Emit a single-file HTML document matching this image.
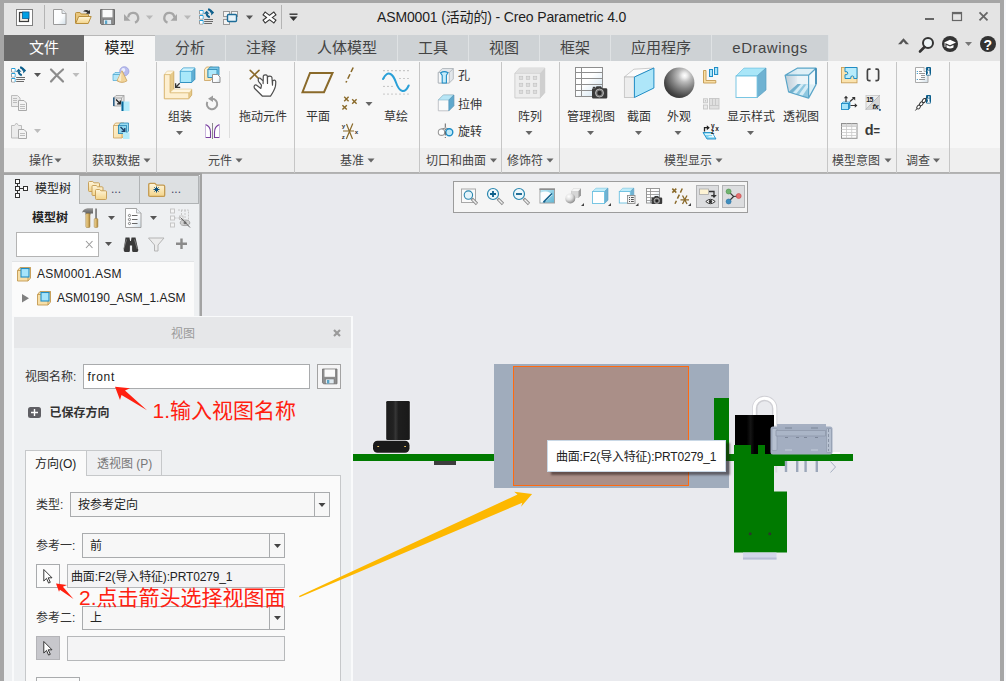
<!DOCTYPE html>
<html lang="zh-CN">
<head>
<meta charset="utf-8">
<title>ASM0001 (活动的) - Creo Parametric 4.0</title>
<style>
*{box-sizing:border-box;margin:0;padding:0}
html,body{width:1006px;height:681px;overflow:hidden;background:#a6a6a6}
body{font-family:"Liberation Sans","Noto Sans CJK SC",sans-serif;font-size:12px;color:#333;position:relative}
#win{position:absolute;left:4px;top:3px;width:996px;height:678px;background:#e9eaee;overflow:hidden}
#rightwhite{position:absolute;left:1004px;top:0;width:2px;height:681px;background:#f8f9fc}
#title{position:absolute;left:0;top:0;width:996px;height:32px;background:#e4e4e4}
#tabs{position:absolute;left:0;top:32px;width:996px;height:26px;background:#e4e4e4}
.tab{position:absolute;top:0;height:26px;line-height:25px;text-align:center;font-size:15px;color:#444;background:#ced2d5;border-right:1px solid #dfe2e4;white-space:nowrap}
.tab.file{background:#6a6a6a;color:#fff;border-right:none}
.tab.act{background:#f7f7f7;color:#222;border-right:none;border-top:1px solid #b8b8b8;line-height:24px}
#ribbon{position:absolute;left:0;top:58px;width:996px;height:112px;background:#f7f7f7;border-bottom:1px solid #b0b0b0}
#rlabels{position:absolute;left:0;top:87px;width:996px;height:24px;background:#efefef}
/* page-coordinate layer */
#pg{position:absolute;left:-4px;top:-3px;width:1006px;height:681px}
#pg>svg{position:absolute;left:0;top:0;width:1006px;height:681px;overflow:visible}
.t{position:absolute;white-space:nowrap;font-size:12px;line-height:16px;color:#333}
.gl{color:#444}
.gs{position:absolute;top:62px;width:1px;height:111px;background:#c6c6c6}
.b{font-weight:bold}
</style>
</head>
<body>
<div id="win">
  <div id="title"></div>
  <div id="tabs">
    <div class="tab file" style="left:0;width:80px">文件</div>
    <div class="tab act" style="left:80px;width:71px">模型</div>
    <div class="tab" style="left:151px;width:71px">分析</div>
    <div class="tab" style="left:222px;width:71px">注释</div>
    <div class="tab" style="left:293px;width:101px">人体模型</div>
    <div class="tab" style="left:394px;width:71px">工具</div>
    <div class="tab" style="left:465px;width:71px">视图</div>
    <div class="tab" style="left:536px;width:71px">框架</div>
    <div class="tab" style="left:607px;width:101px">应用程序</div>
    <div class="tab" style="left:708px;width:117px;letter-spacing:0.5px">eDrawings</div>
  </div>
  <div id="ribbon"><div id="rlabels"></div></div>
  <div id="pg">
<!-- ===== title bar ===== -->
<div class="t" style="left:377px;top:8px;font-size:14px;line-height:18px;color:#1e1e1e;letter-spacing:-0.15px">ASM0001 (活动的) - Creo Parametric 4.0</div>
<svg viewBox="0 0 1006 681">
<defs>
<linearGradient id="gDoc" x1="0" y1="0" x2="1" y2="1"><stop offset="0" stop-color="#ffffff"/><stop offset="0.6" stop-color="#fbfcfd"/><stop offset="1" stop-color="#cfdde6"/></linearGradient>
<linearGradient id="gFold" x1="0" y1="0" x2="0" y2="1"><stop offset="0" stop-color="#fff6dc"/><stop offset="1" stop-color="#f3d48a"/></linearGradient>
<linearGradient id="gCyan" x1="0" y1="0" x2="1" y2="1"><stop offset="0" stop-color="#c8f0fb"/><stop offset="1" stop-color="#9ee0f5"/></linearGradient>
<linearGradient id="gSide" x1="0" y1="0" x2="1" y2="1"><stop offset="0" stop-color="#7fc4e0"/><stop offset="1" stop-color="#4e9fc4"/></linearGradient>
<linearGradient id="gTan" x1="0" y1="0" x2="1" y2="1"><stop offset="0" stop-color="#fff2d2"/><stop offset="1" stop-color="#f6dca0"/></linearGradient>
<radialGradient id="gSph" cx="0.35" cy="0.3" r="0.8"><stop offset="0" stop-color="#f2f2f2"/><stop offset="0.35" stop-color="#8d8d8d"/><stop offset="0.8" stop-color="#3a3a3a"/><stop offset="1" stop-color="#222"/></radialGradient>
<radialGradient id="gSphL" cx="0.35" cy="0.3" r="0.8"><stop offset="0" stop-color="#ffffff"/><stop offset="0.45" stop-color="#dedede"/><stop offset="1" stop-color="#7c7c7c"/></radialGradient>
<g id="regen">
  <g fill="#fff" stroke-width="1"><path d="M0.500 1.500v3.500h3.500M0.500 6.500v3.500h3.500M0.500 11.500v3.500h3.500" stroke="#9a9a9a"/>
  <path d="M0.500 1.500h3.500v3.500M0.500 6.500h3.500v3.500M0.500 11.500h3.500v3.500" stroke="#21a0dc"/></g>
  <rect x="1" y="2" width="2.500" height="2.500" fill="#fff"/><rect x="1" y="7" width="2.500" height="2.500" fill="#fff"/><rect x="1" y="12" width="2.500" height="2.500" fill="#fff"/>
  <path d="M5.200 10.500h8.800M5.200 12.500h8.800M5.200 14.500h7.800" stroke="#6a6a6a" stroke-width="1"/>
  <path d="M4.800 4.800l2.900-3.100 2.700 3.100z" fill="#0d5f8c"/><path d="M7.600 4.500q0.300 3 3.200 3.700" fill="none" stroke="#0d5f8c" stroke-width="2"/>
  <path d="M12.200 0.800l2.900 2.800-2.900 2.800z" fill="#0d5f8c"/><path d="M12.500 3.600q-0.500-2.600-3.400-3.300" fill="none" stroke="#0d5f8c" stroke-width="2"/>
</g>
<path id="dda" d="M0 0h7l-3.5 4z"/>
</defs>
<!-- app icon -->
<rect x="16.5" y="9.5" width="16" height="16" fill="#fff" stroke="#808080"/>
<rect x="19.5" y="12.5" width="9" height="9" fill="#f1eee6" stroke="#3c3c3c" stroke-width="1.2"/>
<rect x="22.5" y="12" width="6.5" height="6.5" fill="#00a0e4" stroke="#0a5c96" stroke-width="0.8"/>
<rect x="44" y="5" width="1" height="24" fill="#b4b4b4"/>
<!-- new -->
<path d="M53.5 9.5h8.5l4 4v11h-12.500z" fill="url(#gDoc)" stroke="#9a9a9a"/>
<path d="M62 9.500v4h4" fill="#e9eef2" stroke="#9a9a9a" stroke-width="0.8"/>
<!-- open -->
<path d="M75.500 23v-9.500q0-1 1-1h3.500l1.200 1.500h6.300q1 0 1 1v2" fill="#e9c67c" stroke="#b98f3c" stroke-width="1"/>
<path d="M75.700 23.500l3-7h12.500l-3 7z" fill="url(#gFold)" stroke="#b98f3c" stroke-width="1"/>
<path d="M83 11.500q3-2.500 6-0.500l1-1.200v4h-4l1.300-1.300q-2-1.200-4.300-1z" fill="#333"/>
<!-- save -->
<path d="M100.500 9.500h14v15h-13l-1-1z" fill="#8b8b8b" stroke="#6e6e6e"/>
<rect x="102.500" y="9.800" width="10" height="7.500" fill="#fafafa"/>
<rect x="103.500" y="19.500" width="8" height="5" fill="#dfe9ef" stroke="#6e6e6e" stroke-width="0.6"/>
<rect x="105" y="20.500" width="2.200" height="3.500" fill="#5aa5c8"/>
<!-- undo / redo -->
<path d="M128.200 17.500A5 5 0 1 1 135 22.600" fill="none" stroke="#a6a6a6" stroke-width="2.300"/>
<path d="M124 14v6.800h6.500z" fill="#a6a6a6"/>
<use href="#dda" x="146" y="15.500" fill="#b9b9b9"/>
<path d="M174.300 17.500A5 5 0 1 0 167.500 22.600" fill="none" stroke="#a6a6a6" stroke-width="2.300"/>
<path d="M177 14v6.800h-6.500z" fill="#a6a6a6"/>
<use href="#dda" x="184" y="15.500" fill="#b9b9b9"/>
<!-- regen -->
<use href="#regen" x="199" y="9"/>
<!-- windows -->
<rect x="223.500" y="11.500" width="6" height="5" fill="#f4f4f4" stroke="#9a9a9a"/>
<rect x="231.500" y="11.500" width="6" height="5" fill="#f4f4f4" stroke="#9a9a9a"/>
<rect x="223.500" y="19.500" width="6" height="5" fill="#f4f4f4" stroke="#9a9a9a"/>
<rect x="227.500" y="14.500" width="9" height="7" rx="1" fill="#e8f4fa" stroke="#1d6c98" stroke-width="1.400"/>
<use href="#dda" x="246" y="15.500" fill="#555"/>
<!-- close x -->
<path d="M265.500 14.500l8 6M273.500 14.500l-8 6" stroke="#333" stroke-width="4.600" stroke-linecap="square"/>
<path d="M265.500 14.500l8 6M273.500 14.500l-8 6" stroke="#fff" stroke-width="2.400" stroke-linecap="square"/>
<path d="M265.500 14.500l8 6M273.500 14.500l-8 6" stroke="#333" stroke-width="1" stroke-linecap="square" opacity="0"/>
<rect x="281" y="5" width="1" height="24" fill="#b4b4b4"/>
<rect x="289.500" y="13.500" width="8" height="1.400" fill="#333"/>
<path d="M289.500 16.500h8l-4 4.500z" fill="#333"/>
<!-- window controls -->
<rect x="925" y="18" width="9" height="2" fill="#666"/>
<rect x="952.500" y="12.500" width="9" height="8" fill="none" stroke="#666" stroke-width="1.200"/>
<rect x="952" y="12" width="10" height="2.200" fill="#666"/>
<path d="M979.500 12.300l8 8M987.500 12.300l-8 8" stroke="#666" stroke-width="1.800"/>
<!-- ribbon right controls -->
<path d="M898 44.200l5.500-6 5.500 6h-3.200l-2.300-2.600-2.300 2.600z" fill="#555"/>
<circle cx="928" cy="43" r="5" fill="#eef4f6" stroke="#333" stroke-width="2"/>
<path d="M924.500 47l-4.500 4.500" stroke="#333" stroke-width="2.600" stroke-linecap="round"/>
<circle cx="950" cy="44" r="8" fill="#333"/>
<path d="M944 42.500l6-2.800 6 2.800-6 2.800z" fill="#fff"/>
<path d="M946.500 45v2.500q3.500 2 7 0v-2.500l-3.500 1.600z" fill="#fff"/>
<path d="M945 43v4" stroke="#fff" stroke-width="0.800"/>
<use href="#dda" x="965" y="42" fill="#777"/>
<circle cx="988" cy="44" r="8" fill="#333"/>
</svg>
<div class="t b" style="left:983.500px;top:35.500px;font-size:14px;line-height:18px;color:#fff">?</div>
<!-- ===== ribbon ===== -->
<div class="gs" style="left:86px"></div><div class="gs" style="left:156px"></div><div class="gs" style="left:294px"></div>
<div class="gs" style="left:419px"></div><div class="gs" style="left:501px"></div><div class="gs" style="left:559px"></div>
<div class="gs" style="left:827px"></div><div class="gs" style="left:896px"></div><div class="gs" style="left:949px"></div>
<div class="gs" style="left:229px;top:71px;height:67px;background:#dedede"></div>
<div class="t gl" style="left:29px;top:153px">操作</div>
<div class="t gl" style="left:92px;top:153px">获取数据</div>
<div class="t gl" style="left:208px;top:153px">元件</div>
<div class="t gl" style="left:340px;top:153px">基准</div>
<div class="t gl" style="left:426px;top:153px">切口和曲面</div>
<div class="t gl" style="left:507px;top:153px">修饰符</div>
<div class="t gl" style="left:664px;top:153px">模型显示</div>
<div class="t gl" style="left:832px;top:153px">模型意图</div>
<div class="t gl" style="left:906px;top:153px">调查</div>
<div class="t" style="left:168px;top:109px">组装</div>
<div class="t" style="left:239px;top:109px">拖动元件</div>
<div class="t" style="left:306px;top:109px">平面</div>
<div class="t" style="left:384px;top:109px">草绘</div>
<div class="t" style="left:458px;top:68px">孔</div>
<div class="t" style="left:458px;top:97px">拉伸</div>
<div class="t" style="left:458px;top:124px">旋转</div>
<div class="t" style="left:518px;top:109px">阵列</div>
<div class="t" style="left:567px;top:109px">管理视图</div>
<div class="t" style="left:627px;top:109px">截面</div>
<div class="t" style="left:667px;top:109px">外观</div>
<div class="t" style="left:727px;top:109px">显示样式</div>
<div class="t" style="left:783px;top:109px">透视图</div>
<svg viewBox="0 0 1006 681">
<g fill="#666">
<use href="#dda" x="54.500" y="158.500"/><use href="#dda" x="143.500" y="158.500"/><use href="#dda" x="235.500" y="158.500"/>
<use href="#dda" x="367.500" y="158.500"/><use href="#dda" x="490" y="158.500"/><use href="#dda" x="546.500" y="158.500"/>
<use href="#dda" x="715.500" y="158.500"/><use href="#dda" x="884.500" y="158.500"/><use href="#dda" x="933" y="158.500"/>
<use href="#dda" x="176" y="131"/><use href="#dda" x="525.500" y="131"/><use href="#dda" x="587" y="131"/>
<use href="#dda" x="635" y="131"/><use href="#dda" x="674.500" y="131"/><use href="#dda" x="747" y="131"/>
<use href="#dda" x="365.500" y="102"/>
</g>
<!-- group 1 -->
<use href="#regen" x="11" y="67"/>
<use href="#dda" x="34" y="73" fill="#555"/>
<path d="M51 69.500l12 12M63 69.500q-6 5-12 12" stroke="#8c8c8c" stroke-width="2.200" fill="none" stroke-linecap="round"/>
<use href="#dda" x="72.500" y="73" fill="#bdbdbd"/>
<g stroke="#bcbcbc" fill="#ececec" stroke-width="1">
<path d="M11.500 95.500h6l2.500 2.500v8.500h-8.500z"/><path d="M18.500 100.500h5.500l2.500 2.500v7.500h-8z" fill="#f4f4f4" stroke="#a9a9a9"/>
<path d="M20 104.500h5M20 106.500h5M20 108.500h5M13 98.500h4M13 100.500h4M13 102.500h4" stroke-width="0.800" stroke="#b0b0b0"/>
<path d="M11.500 125.500h3l2-2.500 2 2.500h3v12.500h-10z"/><path d="M18.500 129.500h5.500l2.500 2.500v6.500h-8z" fill="#f4f4f4" stroke="#a9a9a9"/>
<path d="M20 133.500h5M20 135.500h5" stroke-width="0.800" stroke="#b0b0b0"/>
</g>
<use href="#dda" x="34" y="129" fill="#bdbdbd"/>
<!-- group 2 -->
<path d="M113 74.500l2-2h7.500v6l-2 2h-7.500z" fill="#b5e6f7" stroke="#5ab0d8" stroke-width="0.800"/>
<path d="M113 74.500h7.500v6M120.500 74.500l2-2" fill="none" stroke="#4aa6cf" stroke-width="0.800"/>
<circle cx="124.300" cy="71.300" r="4.600" fill="#b9bdee" stroke="#9aa0dc" stroke-width="0.800"/>
<circle cx="123.300" cy="70" r="2" fill="#eceeff"/>
<path d="M122 70.800l5 10q-5 3.200-10 0z" fill="#f2d49a" stroke="#c9a05a" stroke-width="0.800"/>
<path d="M121.500 71l-3.500 9q1.500 1 3 1.200z" fill="#fbeccb"/>
<!-- g2 icon 2 -->
<path d="M113.500 98l2.500-2.500h8v8l-2.500 2.500h-8z" fill="#e6e6e6" stroke="#9a9a9a" stroke-width="0.800"/>
<path d="M113.500 98h8v8M121.500 98l2.500-2.500" fill="none" stroke="#9a9a9a" stroke-width="0.800"/>
<rect x="113" y="97.500" width="1.600" height="8.500" fill="#2d5f86"/>
<path d="M116 99.500l4 4M120.300 100.600v3.200h-3.200" stroke="#222" stroke-width="1.300" fill="none"/>
<rect x="121.500" y="101.500" width="8" height="9.500" fill="#b5ecfb"/>
<rect x="121.500" y="101.500" width="2" height="9.500" fill="#0a6a9c"/>
<!-- g2 icon 3 -->
<path d="M113.500 125.500l2-2.500h8.500v12.500l-2 2.500h-8.500z" fill="url(#gTan)" stroke="#c9a05a" stroke-width="0.800"/>
<path d="M113.500 125.500h8.500v12" fill="none" stroke="#c9a05a" stroke-width="0.800"/>
<path d="M118.500 125.500l2-2.500h8v8l-2 2.500h-8z" fill="#9adcf2" stroke="#2a87b4" stroke-width="0.800"/>
<rect x="118.500" y="125.500" width="8" height="8" fill="#8fd6ef" stroke="#2a87b4" stroke-width="0.800"/>
<path d="M120.500 127l4 4M124.800 128v3.300h-3.300" stroke="#1c3f66" stroke-width="1.300" fill="none"/>
<rect x="123" y="132.500" width="6.500" height="6.500" fill="#b5ecfb"/>
<!-- group 3: assemble -->
<path d="M164.400 74.600l2.900-3.300h6.500v18h17.900v5.800l-2.900 3.600h-24.400z" fill="#e6ca8a" stroke="#d0aa62" stroke-width="0.900" stroke-linejoin="round"/>
<path d="M164.400 74.600l2.900-3.300h6.500l-3.800 3.300z" fill="#fff6e0"/>
<path d="M170 92.800l3.800-3.500h17.900l-2.900 3.500z" fill="#fff6e0"/>
<path d="M164.400 74.600h5.600v18.200h18.800v5.900h-24.400z" fill="#fdefd0" stroke="#d9b874" stroke-width="0.800" stroke-linejoin="round"/>
<path d="M180.300 71.300l2.900-3.200h11.700v11.200l-3.200 3.200h-11.400z" fill="#62aed2" stroke="#2e8fc0" stroke-width="0.900" stroke-linejoin="round"/>
<path d="M180.300 71.300l2.900-3.200h11.700l-3.200 3.200z" fill="#d2f4fd" stroke="#58b4dc" stroke-width="0.600" stroke-linejoin="round"/>
<rect x="180.300" y="71.300" width="11.400" height="11.200" fill="#a9e8fa" stroke="#4aa8d4" stroke-width="0.700"/>
<path d="M180.300 82.500h11.400" stroke="#2e8fc0" stroke-width="0.900"/>
<path d="M175.600 83.200v4.200h4.600M175.800 87.200l3.900-3.900" stroke="#333" stroke-width="1.300" fill="none"/>
<!-- g3 small icons -->
<path d="M204.500 69.500l2-2.500h6v11l-2 2.500h-6z" fill="url(#gTan)" stroke="#c9a05a" stroke-width="0.800"/>
<path d="M208 69.500l2-2.500h9v8l-2 2.500h-9z" fill="#7cc8e6" stroke="#2a87b4" stroke-width="0.800"/>
<rect x="208" y="69.500" width="9" height="8" fill="#aee9fb" stroke="#2a87b4" stroke-width="0.800"/>
<path d="M212.500 74.500h5l2.500 2.500v5.500h-7.500z" fill="url(#gDoc)" stroke="#909090" stroke-width="1"/>
<path d="M212 98.800A5.200 5.200 0 1 1 207.300 101.800" fill="none" stroke="#9c9c9c" stroke-width="2"/>
<path d="M208 98.800l5-3.300v6.600z" fill="#9c9c9c"/>
<path d="M205.500 124.500q5 2 5 7.500v5.500h-5" fill="#fff" stroke="#7a3fa0" stroke-width="1.100"/>
<path d="M205.500 124.500v13" stroke="#c9b6dc" stroke-width="1"/>
<path d="M219.500 124.500q-5 2-5 7.500v5.500h5" fill="#fff" stroke="#7a3fa0" stroke-width="1.100"/>
<path d="M219.500 124.500v13" stroke="#c9b6dc" stroke-width="1"/>
<path d="M212.500 123v16" stroke="#8a8a8a" stroke-width="1"/>
<!-- drag -->
<path d="M250.200 70.400l8.800 8.400M259 70.400l-8.800 8.400" stroke="#8a6a2a" stroke-width="1.600" stroke-linecap="round"/>
<path d="M258.500 78.600q-0.600 1.800 0.200 3l2.800 3.600-0.600 3.200-4.600-3.400q-1.800-0.300-2.200 1.400 0 1.500 0.600 2.100l7.800 7.700h8q4-6 4.800-9.500 0.600-3 0.400-5.300-0.400-1.600-1.600-1.300-1.400 0.200-1.500 1l-0.100 4-0.600-7.800q-0.300-1.200-2-1.200-2 0-2.400 0.800l0 6.500 -0.200-7.500q-0.400-1-1.800-1-1.700 0-2.200 1l-0.200 7.700 0-2.700-2.900-2.700q-0.900-0.500-1.700 0.300z" fill="#fff" stroke="#4f4f4f" stroke-width="1.200" stroke-linejoin="round"/>
<!-- plane -->
<path d="M310 73h22.500l-8.500 19.200h-21.500z" fill="none" stroke="#8a6a2a" stroke-width="2"/>
<path d="M353.200 67.500l-7.200 15" stroke="#8a6a2a" stroke-width="1.600" stroke-dasharray="5 2.500"/>
<g stroke="#8a6a2a" stroke-width="1.100">
<path d="M344.200 96.800l4.400 4.400M348.600 96.800l-4.400 4.400M352.200 99.300l4.400 4.400M356.600 99.300l-4.400 4.400M342.400 105.200l4.400 4.400M346.800 105.200l-4.400 4.400" stroke-width="1.400"/>
<path d="M346.500 124l6 15M352.800 123.500l-6.500 15.500M343 131h11" stroke-width="1.200"/>
</g>
<g font-family="Liberation Sans,sans-serif" font-size="6.200" font-weight="bold" fill="#333"><text x="341.800" y="127.500">y</text><text x="341.800" y="139">z</text><text x="354.800" y="133.500">x</text></g>
<!-- sketch -->
<g fill="#909090">
<circle cx="384" cy="70.700" r="0.600"/><circle cx="388" cy="70.700" r="0.600"/><circle cx="392" cy="70.700" r="0.600"/><circle cx="396" cy="70.700" r="0.600"/><circle cx="400" cy="70.700" r="0.600"/><circle cx="404" cy="70.700" r="0.600"/><circle cx="408" cy="70.700" r="0.600"/>
<circle cx="384" cy="78.500" r="0.600"/><circle cx="400" cy="78.500" r="0.600"/><circle cx="404" cy="78.500" r="0.600"/><circle cx="408" cy="78.500" r="0.600"/>
<circle cx="384" cy="86.300" r="0.600"/><circle cx="388" cy="86.300" r="0.600"/><circle cx="392" cy="86.300" r="0.600"/><circle cx="408" cy="86.300" r="0.600"/>
<circle cx="384" cy="94" r="0.600"/><circle cx="388" cy="94" r="0.600"/><circle cx="392" cy="94" r="0.600"/><circle cx="396" cy="94" r="0.600"/><circle cx="400" cy="94" r="0.600"/><circle cx="404" cy="94" r="0.600"/><circle cx="408" cy="94" r="0.600"/>
</g>
<path d="M383 79q3.500-7 7.500-5 3 1.500 5.500 8.500 2.500 7.500 6.500 8.500 3.500 0.500 6.200-5.500" fill="none" stroke="#2aa0d8" stroke-width="2" stroke-linecap="round"/>
<!-- hole -->
<path d="M438.300 72.500l4-4h11v10.500l-4 4h-11z" fill="#e2e6ea" stroke="#aab0b6" stroke-width="0.800" stroke-linejoin="round"/>
<path d="M438.300 72.500h11v10.500h-11zM449.300 72.500l4-4" fill="#f6f7f8" stroke="#aab0b6" stroke-width="0.800"/>
<path d="M440.500 73q3.500-2.600 7.500-0.300l-1.600 2.600v7.700h-4.200v-7.700z" fill="#c6ecfa" stroke="#1f8dc6" stroke-width="1.100" stroke-linejoin="round"/>
<!-- extrude -->
<path d="M438.300 100l5-5h10.500v10.800l-5 5h-10.500z" fill="#fafafa" stroke="#b4b8bc" stroke-width="0.800" stroke-linejoin="round"/>
<path d="M438.300 100l5-5h10.500l-5 5z" fill="#b8e6f6" stroke="#8ab8cc" stroke-width="0.600"/>
<path d="M448.800 100l5-5v10.800l-5 5z" fill="#5fa8cc" stroke="#4a8fb4" stroke-width="0.600"/>
<!-- revolve -->
<path d="M440.500 129.300q4.800-2.300 9.600-0.300" stroke="#8a8a8a" stroke-width="1" fill="none"/>
<circle cx="441.500" cy="132.200" r="3.200" fill="#fff" stroke="#9a9a9a" stroke-width="1.100"/>
<circle cx="449.300" cy="132.200" r="3.500" fill="#bfeaf9" stroke="#1f8dc6" stroke-width="1.400"/>
<path d="M445.300 123.500v16" stroke="#555" stroke-width="0.900" stroke-dasharray="4 1.500 1 1.500"/>
<!-- pattern -->
<path d="M515 73.200l4.600-5.200h25.200v24.700l-4.600 5.200h-25.200z" fill="#cfcfcf" stroke="#c4c4c4" stroke-width="0.600" stroke-linejoin="round"/>
<path d="M515 73.200l4.600-5.200h25.200l-4.600 5.200z" fill="#e0e0e0"/>
<rect x="515" y="73.200" width="25.200" height="24.700" fill="#ededed" stroke="#c9c9c9" stroke-width="0.600"/>
<rect x="519.2" y="76.2" width="3.600" height="3.400" fill="#dcdcdc" stroke="#bdbdbd" stroke-width="0.500"/><rect x="526.2" y="76.2" width="3.600" height="3.400" fill="#dcdcdc" stroke="#bdbdbd" stroke-width="0.500"/><rect x="533.2" y="76.2" width="3.600" height="3.400" fill="#dcdcdc" stroke="#bdbdbd" stroke-width="0.500"/><rect x="519.2" y="83.2" width="3.600" height="3.400" fill="#dcdcdc" stroke="#bdbdbd" stroke-width="0.500"/><rect x="526.2" y="83.2" width="3.600" height="3.400" fill="#dcdcdc" stroke="#bdbdbd" stroke-width="0.500"/><rect x="533.2" y="83.2" width="3.600" height="3.400" fill="#dcdcdc" stroke="#bdbdbd" stroke-width="0.500"/><rect x="519.2" y="90.2" width="3.600" height="3.400" fill="#dcdcdc" stroke="#bdbdbd" stroke-width="0.500"/><rect x="526.2" y="90.2" width="3.600" height="3.400" fill="#dcdcdc" stroke="#bdbdbd" stroke-width="0.500"/><rect x="533.2" y="90.2" width="3.600" height="3.400" fill="#dcdcdc" stroke="#bdbdbd" stroke-width="0.500"/>
<!-- manage views -->
<defs><linearGradient id="gTbl" x1="0" y1="0" x2="1" y2="1"><stop offset="0.45" stop-color="#ffffff"/><stop offset="1" stop-color="#c9dfee"/></linearGradient></defs>
<rect x="575.500" y="67.500" width="27" height="29" fill="url(#gTbl)" stroke="#8e8e8e" stroke-width="1"/>
<path d="M575.500 72.500h27M575.500 78.500h27M575.500 84.500h27M575.500 90.500h27M581.500 67.500v29" stroke="#8e8e8e" stroke-width="1"/>
<path d="M592 89.500q0-1.300 1.300-1.300h2l1.200-2h4.500l1.200 2h3.800q1.300 0 1.300 1.300v7.700q0 1.300-1.300 1.300h-12.700q-1.300 0-1.300-1.300z" fill="#3a3a3a"/>
<rect x="592.800" y="86.800" width="2.600" height="1.500" fill="#3a3a3a"/>
<circle cx="599.500" cy="93" r="4" fill="#777" stroke="#bdbdbd" stroke-width="0.900"/><circle cx="599.500" cy="93" r="2.200" fill="#2a2a2a"/>
<!-- section -->
<path d="M624.300 77l9.600-7.800 20-1.200-19.500 9z" fill="#fbfbfb" stroke="#b8b8b8" stroke-width="0.700" stroke-linejoin="round"/>
<rect x="624.300" y="77" width="10.100" height="20.500" fill="#ededed" stroke="#b8b8b8" stroke-width="0.700"/>
<path d="M634.400 77l19.500-9v20l-19.500 9.500z" fill="#aee6f9" stroke="#1f8dc6" stroke-width="1" stroke-linejoin="round"/>
<!-- appearance sphere -->
<defs><radialGradient id="gSph2" cx="0.680" cy="0.260" r="0.850"><stop offset="0" stop-color="#ffffff"/><stop offset="0.100" stop-color="#ececec"/><stop offset="0.250" stop-color="#bcbcbc"/><stop offset="0.500" stop-color="#858585"/><stop offset="0.800" stop-color="#484848"/><stop offset="1" stop-color="#2c2c2c"/></radialGradient></defs>
<circle cx="679.200" cy="82.800" r="15.200" fill="url(#gSph2)"/>
<!-- g7 small icons -->
<path d="M703.500 70.500h2.500v10h9.800v2.500h-12.300z" fill="#f9dfa6" stroke="#c39a50" stroke-width="0.900"/>
<rect x="709.500" y="69.500" width="3" height="7" fill="#a6e4fa" stroke="#1f8dc6" stroke-width="1"/>
<rect x="714.500" y="67.500" width="3.200" height="7" fill="#a6e4fa" stroke="#1f8dc6" stroke-width="1"/>
<g fill="#eaeaea" stroke="#c6c6c6" stroke-width="0.900">
<rect x="703.500" y="98.800" width="4" height="4"/><rect x="703.500" y="105" width="4" height="4"/><rect x="709.500" y="98.500" width="9.500" height="10.500" fill="#e0e0e0"/>
<path d="M712.500 98.500v7M715.500 98.500v7M709.500 105.500h9.500" fill="none"/></g>
<circle cx="705.500" cy="100.800" r="0.600" fill="#aaa"/>
<path d="M703 132.500h9l4 6.500h-9z" fill="#7fd4f2" stroke="#1f8dc6" stroke-width="0.900"/>
<path d="M705 134.300h7l1.500 2.500h-5" fill="none" stroke="#fff" stroke-width="1.100"/>
<path d="M704.500 131.500v-3.800h3" fill="none" stroke="#222" stroke-width="1.300"/><path d="M706.800 125.200l3 2.500-3 2.500z" fill="#222"/>
<g font-family="Liberation Sans,sans-serif" font-size="6.500" font-weight="bold" fill="#222"><text x="711" y="127.500">y</text><text x="711" y="134">z</text><text x="715.300" y="130.500">x</text></g>
<!-- display style cube -->
<path d="M736 76l8-7.900h22l-8.900 7.900z" fill="#a9e6f8" stroke="#6cc0e0" stroke-width="0.700" stroke-linejoin="round"/>
<path d="M757.100 76l8.900-7.900v21.900l-8.900 7.500z" fill="#6fb2d2" stroke="#5a9fc2" stroke-width="0.700" stroke-linejoin="round"/>
<rect x="736" y="76" width="21.100" height="21.500" fill="#ffffff" stroke="#6cc0e0" stroke-width="0.900"/>
<!-- perspective -->
<defs><linearGradient id="gPf" x1="0" y1="0" x2="1" y2="0"><stop offset="0" stop-color="#b4c6d2"/><stop offset="0.700" stop-color="#d2dfe8"/><stop offset="1" stop-color="#e6eef3"/></linearGradient>
<linearGradient id="gPfl" x1="0" y1="0" x2="1" y2="0"><stop offset="0" stop-color="#5fa9cc"/><stop offset="0.300" stop-color="#8fcbe4"/><stop offset="0.380" stop-color="#d6eef8"/><stop offset="0.460" stop-color="#7dc0dc"/><stop offset="0.600" stop-color="#cdeaf6"/><stop offset="0.700" stop-color="#8ccbe4"/><stop offset="1" stop-color="#bfe4f3"/></linearGradient></defs>
<path d="M797.200 68.200h18.800v16.400h-18.300z" fill="#e9f3f8"/>
<path d="M785.100 75.200l12.100-7 0.500 15.800-9.100 8z" fill="url(#gPf)"/>
<path d="M797.700 84l18.300 0.600-7.400 13.500-20-6.100z" fill="#7fc0dc"/><path d="M801 84.100l3 0.100-8.500 10.200-3-0.900zM806.500 84.300l3.500 0.100-8 12-3.500-1.100z" fill="#cfeaf5"/><path d="M788.600 92l9.100-8 3 0.100-9 9z" fill="#5fa5c6"/>
<path d="M785.100 75.200h23.500v22.900l-20-6.100z" fill="#ffffff" fill-opacity="0.120"/>
<path d="M808.600 75.200l7.400-7v16.400l-7.400 13.500z" fill="#f4fafd" fill-opacity="0.800"/>
<path d="M785.100 75.200l12.100-7h18.800l-7.400 7z" fill="#d9eef7" fill-opacity="0.700"/>
<path d="M785.100 75.200l12.100-7h18.800l-7.400 7zM785.100 75.200l3.500 16.800 20 6.100v-22.900M808.600 98.100l7.400-13.500" fill="none" stroke="#5aa5c8" stroke-width="1.200" stroke-linejoin="round"/>
<path d="M816 68.200v16.400" stroke="#3a8ab4" stroke-width="1.800"/>
<!-- model intent -->
<rect x="841.500" y="67.500" width="15.500" height="15.300" fill="#fbe3ae" stroke="#c9a05a" stroke-width="0.900"/>
<path d="M845 67.500h12v11h-3.200q0.600-2.600-1.500-2.600-2.100 0-1.500 2.600h-5.800v-3.800q2.800 0.600 2.800-1.500 0-2.100-2.800-1.500z" fill="#b9ecfb" stroke="#1f8dc6" stroke-width="1" stroke-linejoin="round"/>
<path d="M870.600 69.200h-1.600q-1.600 0-1.600 1.600v8.200q0 1.600 1.600 1.600h1.600M875.400 69.200h1.600q1.600 0 1.600 1.600v8.200q0 1.600-1.600 1.600h-1.600" fill="none" stroke="#444" stroke-width="1.700"/>
<path d="M841.500 103.500l1.500-1.500h7l-1.500 1.500z" fill="#c9f0fb" stroke="#1f8dc6" stroke-width="0.700"/>
<path d="M848.500 103.500l1.500-1.500v6l-1.500 1.500z" fill="#4a9ac2" stroke="#1f8dc6" stroke-width="0.700"/>
<rect x="841.500" y="103.500" width="7" height="6" fill="#a6e4fa" stroke="#1f8dc6" stroke-width="0.900"/>
<path d="M846 102v-5M850.500 105.500h5.500M850 101.500l4-3.500" stroke="#333" stroke-width="1.200" fill="none"/>
<path d="M843.800 98.300l2.200-2.600 2.200 2.600zM854.800 103.300l2.600 2.200-2.600 2.200zM851.800 97h3.400v3.400z" fill="#333"/>
<rect x="866" y="95.500" width="13.500" height="14" fill="#ececec" stroke="#c4c4c4" stroke-width="0.800"/>
<path d="M866 109.500l13.500-14" stroke="#9a9a9a" stroke-width="0.900"/>
<path d="M866 109.500l13.500-14v14z" fill="#d4d4d4"/>
<g font-family="Liberation Sans,sans-serif" fill="#222"><text x="866.300" y="102.300" font-size="7" font-weight="bold" letter-spacing="-0.600">15</text><text x="872.500" y="108.600" font-size="7.500" font-style="italic" font-weight="bold" letter-spacing="-0.400">fx</text></g>
<rect x="879" y="109" width="1.800" height="1.800" fill="#1c5f94"/>
<rect x="841.500" y="123.500" width="15.500" height="14.800" fill="#fdfdfd" stroke="#909090" stroke-width="1"/>
<rect x="842" y="124" width="14.500" height="2.300" fill="#dcdcdc"/>
<path d="M841.500 126.500h15.500M841.500 129.500h15.500M841.500 132.500h15.500M841.500 135.500h15.500" stroke="#c9c9c9" stroke-width="0.800"/>
<path d="M846.500 123.500v14.800M851.700 123.500v14.800" stroke="#c9c9c9" stroke-width="0.800"/>
<text x="864.800" y="135.400" font-family="Liberation Sans,sans-serif" font-weight="bold" font-size="14.500" fill="#3a3a3a">d</text><text x="873.600" y="135" font-family="Liberation Sans,sans-serif" font-weight="bold" font-size="12" fill="#3a3a3a" textLength="6.500" lengthAdjust="spacingAndGlyphs">=</text>
<!-- investigate -->
<path d="M915.500 67.500h8.500l4 4v11h-12.500z" fill="url(#gDoc)" stroke="#a0a0a0" stroke-width="0.900"/>
<path d="M924 67.500v4h4" fill="#eef2f5" stroke="#a0a0a0" stroke-width="0.700"/>
<path d="M919 71.500h3M919 73.500h6M921 75.500h4M921 77.500h4M919 79.500h6" stroke="#8a8a8a" stroke-width="0.900"/>
<rect x="916.800" y="71" width="1" height="1" fill="#1f8dc6"/><rect x="916.800" y="73" width="1" height="1" fill="#1f8dc6"/><rect x="916.800" y="79" width="1" height="1" fill="#1f8dc6"/>
<rect x="926" y="67" width="5" height="8.500" rx="1" fill="#0d5f8c"/>
<rect x="926" y="95" width="5" height="8.500" rx="1" fill="#0d5f8c"/>
<g fill="#fff"><rect x="928" y="68.300" width="1.500" height="1.400"/><path d="M927.300 70.600h2.200v3.200h0.800v0.900h-3.300v-0.900h0.900v-2.300h-0.600z"/>
<rect x="928" y="96.300" width="1.500" height="1.400"/><path d="M927.300 98.600h2.200v3.200h0.800v0.900h-3.300v-0.900h0.900v-2.300h-0.600z"/></g>
<path d="M915.400 110.500l11-13" stroke="#333" stroke-width="1"/>
<g fill="#fff" stroke="#333" stroke-width="1"><ellipse cx="918.600" cy="107" rx="1.500" ry="2.200" transform="rotate(40 918.600 107)"/><ellipse cx="921.300" cy="103.800" rx="1.500" ry="2.200" transform="rotate(40 921.300 103.800)"/><ellipse cx="924" cy="100.600" rx="1.500" ry="2.200" transform="rotate(40 924 100.600)"/></g>
</svg>
<!-- ===== left panel ===== -->
<div style="position:absolute;left:4px;top:173px;width:198px;height:508px;background:#eef0f2"></div>
<div style="position:absolute;left:4px;top:173px;width:198px;height:2px;background:#a3a3a3"></div>
<div style="position:absolute;left:200px;top:173px;width:2px;height:508px;background:#a3a3a3"></div>
<div style="position:absolute;left:199px;top:176px;width:1px;height:505px;background:#c4c6c8"></div>
<div style="position:absolute;left:202px;top:173px;width:798px;height:1px;background:#b4b4b4"></div>
<div style="position:absolute;left:79px;top:175px;width:61px;height:29px;background:#dde0e2;border:1px solid #b0b3b5;border-top-color:#a8a8a8"></div>
<div style="position:absolute;left:139px;top:175px;width:60px;height:29px;background:#dde0e2;border:1px solid #b0b3b5;border-top-color:#a8a8a8"></div>
<div class="t" style="left:35px;top:181px;color:#222">模型树</div>
<div class="t" style="left:111px;top:181px;color:#446;letter-spacing:0px">...</div>
<div class="t" style="left:171px;top:181px;color:#446;letter-spacing:0px">...</div>
<div class="t b" style="left:32px;top:210px;color:#222">模型树</div>
<div style="position:absolute;left:16px;top:232px;width:83px;height:25px;background:#fff;border:1px solid #b4b4b4"></div>
<div style="position:absolute;left:12px;top:261px;width:182px;height:56px;background:#fbfbfb;border-top:1px solid #e2e4e6"></div>
<div class="t" style="left:37px;top:266px;color:#222;letter-spacing:0.25px">ASM0001.ASM</div>
<div class="t" style="left:57px;top:290px;color:#222;letter-spacing:0.03px">ASM0190_ASM_1.ASM</div>
<svg viewBox="0 0 1006 681">
<defs>
<g id="asm"><path d="M0.500 3.500l2.500-3h10.500v10.500l-2.500 3h-10.500z" fill="#f7dfa8" stroke="#c39a50" stroke-width="0.900" stroke-linejoin="round"/>
<path d="M0.500 3.500h10.500v10.500M11 3.500l2.500-3" fill="none" stroke="#c39a50" stroke-width="0.900"/>
<rect x="4" y="1.500" width="8" height="8.500" fill="#a6e4fa" stroke="#1f8dc6" stroke-width="1.100"/></g>
<g id="fold"><path d="M0.500 10.500v-8q0-1 1-1h3.200l1.300 1.300h4.500q1 0 1 1v6.700q0 1-1 1h-9q-1 0-1-1z" fill="url(#gFold)" stroke="#c39a50" stroke-width="0.900"/></g>
</defs>
<!-- tree tab icon -->
<g fill="#fff" stroke="#333" stroke-width="1"><rect x="15.500" y="179.500" width="4" height="4"/><rect x="15.500" y="186.500" width="4" height="4"/><rect x="15.500" y="193.500" width="4" height="4"/><rect x="23.500" y="186.500" width="4" height="4"/>
<path d="M17.500 183.500v3M17.500 190.500v3M19.500 188.500h4" fill="none"/></g>
<!-- folders -->
<use href="#fold" x="88" y="180"/><use href="#fold" x="91.500" y="184"/><use href="#fold" x="95" y="188"/>
<g transform="translate(148,181.500) scale(1.450,1.300)"><use href="#fold"/></g>
<g stroke="#0d4f7c" stroke-width="1"><path d="M156.500 186.500v6M153.500 189.500h6M154.400 187.400l4.200 4.200M158.600 187.400l-4.200 4.200"/></g>
<!-- hammer / screwdriver -->
<defs><linearGradient id="gWood" x1="0" y1="0" x2="1" y2="0"><stop offset="0" stop-color="#f0d9a0"/><stop offset="0.500" stop-color="#d9b56a"/><stop offset="1" stop-color="#a9843c"/></linearGradient>
<linearGradient id="gSteel" x1="0" y1="0" x2="0" y2="1"><stop offset="0" stop-color="#9a9a9a"/><stop offset="1" stop-color="#555"/></linearGradient></defs>
<path d="M82 212.500q1.500-4 5.500-4.300h5.500v5.300h-2.500v1h-5v-2q-2-0.800-3.500 0z" fill="url(#gSteel)"/>
<rect x="85.800" y="213.500" width="4.200" height="14" rx="1" fill="url(#gWood)" stroke="#9a7a3a" stroke-width="0.500"/>
<rect x="95.300" y="208.500" width="1.500" height="11" fill="#6a6a6a"/>
<rect x="94.200" y="218.500" width="3.700" height="9" rx="1" fill="url(#gWood)" stroke="#9a7a3a" stroke-width="0.500"/>
<use href="#dda" x="108" y="216" fill="#555"/>
<!-- doc list -->
<path d="M125.500 208.500h11l4.500 4.500v14.500h-15.500z" fill="url(#gDoc)" stroke="#9a9a9a" stroke-width="0.900"/>
<path d="M136.500 208.500v4.500h4.500" fill="#e9f0f5" stroke="#9a9a9a" stroke-width="0.700"/>
<g fill="#fff" stroke="#666" stroke-width="0.800"><circle cx="129.500" cy="215.500" r="1.100"/><circle cx="129.500" cy="219.500" r="1.100"/><circle cx="129.500" cy="223.500" r="1.100"/></g>
<path d="M132 215.500h5.500M132 219.500h5.500M132 223.500h5.500" stroke="#666" stroke-width="1"/>
<use href="#dda" x="150" y="216" fill="#555"/>
<!-- tree eye (disabled) -->
<g fill="#f4f4f4" stroke="#c2c2c2" stroke-width="0.900"><rect x="170.500" y="209" width="4" height="4"/><rect x="170.500" y="216" width="4" height="4"/><rect x="170.500" y="223" width="4" height="4"/><rect x="179.500" y="216" width="3.500" height="3.500"/>
<path d="M174.500 218h5M178 210h10.500v12M181.500 210v5M185 210v8" fill="none" stroke-dasharray="2 1"/></g>
<ellipse cx="185" cy="222.800" rx="4.800" ry="2.800" fill="#d0d0d0" stroke="#9a9a9a" stroke-width="0.800"/><circle cx="185" cy="222.800" r="1.500" fill="#777"/>
<path d="M180.500 217.500l9.500 10" stroke="#555" stroke-width="0.900"/>
<!-- search row -->
<path d="M86 241l6.500 7M92.500 241l-6.500 7" stroke="#9a9a9a" stroke-width="1.100"/>
<use href="#dda" x="105" y="242" fill="#555"/>
<g fill="#3a3a3a"><path d="M125.500 237.500h4l0.600 3.500h0.800l0.600-3.500h4l2.800 12.500q0 2-1.500 2h-3.500q-1.200 0-1.200-1.500v-5h-2.200v5q0 1.500-1.200 1.500h-3.500q-1.500 0-1.500-2z"/></g>
<path d="M126.500 239.500l-2.800 9.500M134.500 239.500l2.800 9.500" stroke="#8a8a8a" stroke-width="0.800"/>
<path d="M148.500 238h15.500l-6 7v6h-3.500v-6z" fill="#ececec" stroke="#b4b4b4" stroke-width="1" stroke-linejoin="round"/>
<path d="M181.500 238.500v10.500M176 243.800h11" stroke="#8a8a8a" stroke-width="2.400"/>
<!-- tree rows -->
<use href="#asm" x="17" y="267"/>
<path d="M22 294l7 4.300-7 4.300z" fill="#808080"/>
<use href="#asm" x="37" y="291"/>
</svg>
<!-- ===== view dialog ===== -->
<div style="position:absolute;left:12px;top:316px;width:341px;height:365px;background:#f9fafb"></div>
<div style="position:absolute;left:14px;top:317px;width:337px;height:364px;background:#eef0f2"></div>
<div style="position:absolute;left:14px;top:317px;width:337px;height:31px;background:#e6e7e9"></div>
<div class="t" style="left:171px;top:326px;color:#9a9a9a">视图</div>
<div class="t" style="left:25px;top:369px">视图名称:</div>
<div style="position:absolute;left:83px;top:364px;width:227px;height:25px;background:#fff;border:1px solid #a9abad"></div>
<div class="t" style="left:87.500px;top:369px;color:#222;letter-spacing:0.7px">front</div>
<div style="position:absolute;left:317px;top:364px;width:24px;height:25px;background:#f5f5f6;border:1px solid #a3a3a3"></div>
<div class="t b" style="left:49.500px;top:405px;color:#333">已保存方向</div>
<!-- tabs -->
<div style="position:absolute;left:25px;top:475px;width:316px;height:210px;background:#fafafa;border:1px solid #c6c8ca"></div>
<div style="position:absolute;left:86px;top:450px;width:76px;height:26px;background:#eff0f2;border:1px solid #c6c8ca"></div>
<div style="position:absolute;left:25px;top:450px;width:62px;height:26px;background:#fafafa;border:1px solid #c6c8ca;border-bottom:none"></div>
<div class="t" style="left:35px;top:456px;color:#222">方向(O)</div>
<div class="t" style="left:97px;top:456px;color:#777">透视图 (P)</div>
<div class="t" style="left:36px;top:497px">类型:</div>
<div style="position:absolute;left:70px;top:492px;width:260px;height:25px;background:#f7f7f7;border:1px solid #a9abad"></div>
<div style="position:absolute;left:314px;top:493px;width:1px;height:23px;background:#a9abad"></div>
<div class="t" style="left:78px;top:497px;color:#222">按参考定向</div>
<div class="t" style="left:36px;top:538px">参考一:</div>
<div style="position:absolute;left:82px;top:533px;width:203px;height:25px;background:#f7f7f7;border:1px solid #a9abad"></div>
<div style="position:absolute;left:269px;top:534px;width:1px;height:23px;background:#a9abad"></div>
<div class="t" style="left:90px;top:538px;color:#222">前</div>
<div style="position:absolute;left:36px;top:564px;width:24px;height:24px;background:#fbfbfb;border:1px solid #a9abad"></div>
<div style="position:absolute;left:67px;top:564px;width:218px;height:24px;background:#f4f4f5;border:1px solid #b6b8ba"></div>
<div class="t" style="left:71px;top:569px;color:#222;letter-spacing:-0.15px">曲面:F2(导入特征):PRT0279_1</div>
<div class="t" style="left:36px;top:610px">参考二:</div>
<div style="position:absolute;left:82px;top:606px;width:203px;height:24px;background:#f7f7f7;border:1px solid #a9abad"></div>
<div style="position:absolute;left:269px;top:607px;width:1px;height:22px;background:#a9abad"></div>
<div class="t" style="left:90px;top:610px;color:#222">上</div>
<div style="position:absolute;left:36px;top:636px;width:24px;height:24px;background:#c7c7cc;border:1px solid #b4b4b8"></div>
<div style="position:absolute;left:67px;top:636px;width:218px;height:25px;background:#f4f4f5;border:1px solid #b6b8ba"></div>
<div style="position:absolute;left:36px;top:677px;width:44px;height:10px;background:#fbfbfb;border:1px solid #a9abad"></div>
<svg viewBox="0 0 1006 681">
<defs><g id="cur"><path d="M0.300 0.500v11.500l2.700-2.600 2.100 4.700 1.700-0.800-2.100-4.500h3.800z" fill="#fff" stroke="#222" stroke-width="0.900" stroke-linejoin="round"/></g></defs>
<path d="M334 330l6 6M340 330l-6 6" stroke="#9a9a9a" stroke-width="2.200"/>
<!-- save -->
<path d="M322.500 369h14.500v14.800h-13.500l-1-1z" fill="#8e8e8e" stroke="#707070" stroke-width="0.800"/>
<rect x="324.500" y="369.400" width="10.500" height="7.400" fill="#fafafa"/>
<rect x="325.500" y="379" width="8.500" height="4.800" fill="#dfe9ef" stroke="#707070" stroke-width="0.500"/>
<rect x="327" y="380" width="2.300" height="3.500" fill="#5aa5c8"/>
<!-- plus -->
<rect x="28" y="407" width="13" height="11" rx="2.500" fill="#5f5f64"/>
<path d="M34.500 409v7M31 412.500h7" stroke="#fff" stroke-width="1.400"/>
<!-- dropdown arrows -->
<use href="#dda" x="318.500" y="503" fill="#444"/><use href="#dda" x="274" y="544" fill="#444"/><use href="#dda" x="274" y="616" fill="#444"/>
<use href="#cur" x="43.500" y="569"/><use href="#cur" x="43.500" y="641"/>
<!-- red arrows -->
<path d="M115 386.800L130 388.200 125 390.600 147 410.200 121.500 395 120 400z" fill="#ff2010"/>
<path d="M56 583.500L67 585 62.900 586.700 73.500 599 59.900 589.700 59 591.800z" fill="#ff2010"/>
</svg>
<div class="t" style="left:152.500px;top:396px;font-size:21px;line-height:30px;color:#ff2010">1.输入视图名称</div>
<div class="t" style="left:79px;top:583px;font-size:21px;line-height:30px;color:#ff2010">2.点击箭头选择视图面</div>
<!-- ===== graphics toolbar ===== -->
<div style="position:absolute;left:453px;top:181px;width:295px;height:32px;background:#f5f5f5;border:1px solid #9c9c9c"></div>
<div style="position:absolute;left:696px;top:185px;width:23px;height:23px;background:#dcdddf;border:1px solid #b2b3b5"></div>
<div style="position:absolute;left:722px;top:185px;width:23px;height:23px;background:#dcdddf;border:1px solid #b2b3b5"></div>
<svg viewBox="0 0 1006 681">
<defs>
<linearGradient id="gHan" x1="0" y1="0" x2="1" y2="0"><stop offset="0" stop-color="#777"/><stop offset="0.500" stop-color="#f0f0f0"/><stop offset="1" stop-color="#999"/></linearGradient>
<g id="mag"><path d="M3.700 3.700l5.300 5.300" stroke="#8a8a8a" stroke-width="3.200" stroke-linecap="butt"/><path d="M4.500 4.500l4 4" stroke="#f2f2f2" stroke-width="1.400"/></g>
<path id="ctri" d="M3 0v3h-3z" fill="#444"/>
</defs>
<!-- refit -->
<rect x="461.500" y="189" width="14" height="13.500" fill="#fafafa" stroke="#a8a8a8" stroke-width="1"/>
<use href="#mag" x="468" y="195"/>
<circle cx="468.400" cy="195.100" r="4.200" fill="#e4f4fb" stroke="#2a86ae" stroke-width="1.100"/>
<!-- zoom in -->
<use href="#mag" x="494" y="195"/>
<circle cx="493" cy="194" r="5.500" fill="#eef8fc" stroke="#2a86ae" stroke-width="1.200"/>
<path d="M490 194h6M493 191v6" stroke="#0d5f8c" stroke-width="1.800"/>
<!-- zoom out -->
<use href="#mag" x="520" y="195"/>
<circle cx="519" cy="194" r="5.500" fill="#eef8fc" stroke="#2a86ae" stroke-width="1.200"/>
<path d="M516 194h6" stroke="#0d5f8c" stroke-width="1.800"/>
<!-- repaint -->
<defs><linearGradient id="gRep" x1="0" y1="0" x2="1" y2="1"><stop offset="0" stop-color="#c4ecf8"/><stop offset="1" stop-color="#5fb4d2"/></linearGradient></defs>
<rect x="540" y="189" width="14.500" height="14" fill="url(#gRep)" stroke="#a0a0a0" stroke-width="1"/>
<rect x="539.500" y="188.500" width="15.500" height="1.500" fill="#8e8e8e"/>
<path d="M540.500 202.500v-10q8-3 12 2.500l-8.500 7.500z" fill="#fcfeff"/>
<path d="M543.500 202l8.500-8.500" stroke="#12608c" stroke-width="1.600"/>
<path d="M542.500 202.500q1.500-2 3-1.500l-0.500 1.500z" fill="#12608c"/>
<!-- rendering: cube + sphere -->
<path d="M571.500 191l2.500-2.800h7v7l-2.500 2.800h-7z" fill="#9c9c9c"/>
<path d="M571.500 191l2.500-2.800h7l-2.500 2.800z" fill="#f6f6f6"/>
<rect x="571.500" y="191" width="7" height="7" fill="#d6d6d6"/>
<circle cx="570.300" cy="198.400" r="5" fill="url(#gSphL)"/>
<use href="#ctri" x="581" y="203"/>
<!-- cube -->
<path d="M592.500 191.500l3.500-3.300h12l-3.500 3.300z" fill="#c0ecf9" stroke="#74c2e0" stroke-width="0.600"/>
<path d="M604.500 191.500l3.500-3.300v12l-3.500 3.300z" fill="#6fb2d2" stroke="#5a9fc2" stroke-width="0.600"/>
<rect x="592.500" y="191.500" width="12" height="12" fill="#fff" stroke="#6cc0e0" stroke-width="0.900"/>
<use href="#ctri" x="608" y="203"/>
<!-- cube + list -->
<path d="M619.300 191.500l3.500-3.300h11l-3.500 3.300z" fill="#c0ecf9" stroke="#74c2e0" stroke-width="0.600"/>
<path d="M630.300 191.500l3.500-3.300v11.500l-3.500 3.300z" fill="#6fb2d2" stroke="#5a9fc2" stroke-width="0.600"/>
<rect x="619.300" y="191.500" width="11" height="11.500" fill="#fff" stroke="#6cc0e0" stroke-width="0.900"/>
<rect x="627.500" y="195.500" width="7.500" height="8" fill="#f0f0f0" stroke="#8e8e8e" stroke-width="0.900"/>
<path d="M629 197.500h1M631 197.500h2.800M629 199.500h1M631 199.500h2.800M629 201.500h1M631 201.500h2.800" stroke="#444" stroke-width="0.900"/>
<use href="#ctri" x="635.500" y="203"/>
<!-- table + camera -->
<rect x="646.500" y="188.500" width="13" height="14.500" fill="url(#gTbl)" stroke="#8e8e8e" stroke-width="0.900"/>
<path d="M646.500 191.500h13M646.500 194.500h13M646.500 197.500h13M646.500 200.500h13M650.500 188.500v14.500" stroke="#8e8e8e" stroke-width="0.800"/>
<path d="M651.500 198.500q0-1 1-1h1.500l0.800-1.500h3.400l0.800 1.500h2.200q1 0 1 1v4.500q0 1-1 1h-8.700q-1 0-1-1z" fill="#3a3a3a"/>
<circle cx="656.800" cy="200.800" r="2.700" fill="#6e6e6e" stroke="#c4c4c4" stroke-width="0.700"/><circle cx="656.800" cy="200.800" r="1.400" fill="#222"/>
<!-- datum display -->
<g stroke="#8a6a2a" stroke-width="1.500"><path d="M672.300 188.600l4 4M676.300 188.600l-4 4"/><path d="M682.300 188.500l-7.300 15.200" stroke-dasharray="4.500 2.300"/>
<path d="M680.500 199.800h8.500M682.500 195.500l4.500 8.500M687 195.500l-4.500 8.500" stroke-width="1.300"/></g>
<use href="#ctri" x="688" y="203"/>
<!-- btn 1 content -->
<rect x="699.500" y="189" width="9" height="5.500" fill="#fdf3d4" stroke="#a8a8a8" stroke-width="0.800"/>
<path d="M709 191.500h5v4" fill="none" stroke="#333" stroke-width="1.300"/><path d="M711.200 195l2.800 3 2.800-3z" fill="#333"/>
<path d="M711 196l3-1" stroke="#333" stroke-width="1"/>
<path d="M705.800 201.500q4.700-4.400 9.400 0-4.700 4.400-9.400 0z" fill="#fff" stroke="#333" stroke-width="1"/><circle cx="710.500" cy="201.500" r="1.700" fill="#333"/>
<!-- btn 2 content -->
<path d="M728.600 191.500l5 5 5.100-0.500M733.600 196.500l-5 5" stroke="#333" stroke-width="1.100" fill="none"/>
<circle cx="728.600" cy="191.500" r="2.500" fill="#6fb46f" stroke="#4a8f4a" stroke-width="0.600"/>
<circle cx="728.600" cy="201.500" r="2.500" fill="#3f8fbf" stroke="#2a6f9f" stroke-width="0.600"/>
<circle cx="738.700" cy="196" r="2.500" fill="#e87070" stroke="#c04a4a" stroke-width="0.600"/>
</svg>
<!-- ===== 3D model ===== -->
<svg viewBox="0 0 1006 681">
<defs>
<linearGradient id="gCyl" x1="0" y1="0" x2="1" y2="0"><stop offset="0" stop-color="#1c1c1c"/><stop offset="0.300" stop-color="#222"/><stop offset="0.400" stop-color="#363636"/><stop offset="0.520" stop-color="#1e1e1e"/><stop offset="1" stop-color="#191919"/></linearGradient>
<linearGradient id="gBlk" x1="0" y1="0" x2="1" y2="0"><stop offset="0" stop-color="#000"/><stop offset="0.300" stop-color="#000"/><stop offset="0.400" stop-color="#141414"/><stop offset="0.500" stop-color="#000"/><stop offset="1" stop-color="#000"/></linearGradient>
<linearGradient id="gRing" x1="0" y1="0" x2="1" y2="0"><stop offset="0" stop-color="#fff"/><stop offset="1" stop-color="#c8c8cc"/></linearGradient>
</defs>
<!-- left board -->
<rect x="353" y="454" width="141" height="7" fill="#007a00"/>
<rect x="434" y="461" width="22" height="4" fill="#3c3c3c"/>
<rect x="372.300" y="440.200" width="38" height="13" rx="4.500" fill="#f4f4f4"/>
<rect x="385.500" y="400.500" width="25" height="40" rx="1.500" fill="#f2f2f4"/>
<rect x="386.200" y="401" width="23.600" height="39" rx="1.300" fill="url(#gCyl)"/>
<rect x="373" y="440.800" width="36.500" height="12" rx="4.500" fill="#1a1a1a"/>
<rect x="377.300" y="446" width="1.800" height="1" fill="#e8c060"/><rect x="404.200" y="446" width="1.800" height="1" fill="#e8c060"/>
<!-- shield box -->
<rect x="494" y="364" width="235" height="124" fill="#a0acbc"/>
<rect x="513.500" y="366.500" width="175" height="119" fill="#aa8f88" stroke="#ff6a10" stroke-width="1"/>
<rect x="714" y="398" width="15" height="63" fill="#007a00"/>
<!-- right board -->
<path d="M754.800 415v-6.600a9.900 9.900 0 0 1 19.800 0v17" fill="none" stroke="#cfcfd4" stroke-width="5.400"/>
<path d="M754.300 415v-6.600a10.300 10.300 0 0 1 20.600 0v17" fill="none" stroke="#ffffff" stroke-width="3"/>
<path d="M776.300 461v11.500" stroke="#dcdce0" stroke-width="2"/>
<rect x="735" y="415" width="39" height="39" fill="url(#gBlk)"/>
<rect x="729" y="454" width="124" height="7" fill="#007a00"/>
<path d="M734 445h17v9h7v-9h7v9h9v7h13v5h-13v25.500h13v61h-53z" fill="#007a00"/>
<rect x="831" y="452" width="9" height="2" fill="#fbfbfb"/>
<!-- usb -->
<rect x="777" y="424" width="49" height="4" fill="#a6b0c2"/>
<rect x="770.500" y="426.500" width="62" height="28" rx="2.500" fill="#a3aec1"/>
<rect x="772" y="428.500" width="5" height="22" rx="1" fill="#b6c0d0" stroke="#8c96a8" stroke-width="0.600"/>
<rect x="826.500" y="428.500" width="5" height="24" rx="1" fill="#b6c0d0" stroke="#8c96a8" stroke-width="0.600"/>
<path d="M776 430.500h49.500v5.500h-49.500z" fill="#aab5c7" stroke="#8e98aa" stroke-width="0.800"/>
<path d="M785 428h7M811 428h7M785 437.500h3M796 437.500h3M804 437.500h3M815 437.500h3" stroke="#7c8698" stroke-width="1.200"/>
<path d="M785 450h7M811 450h7" stroke="#c6cedb" stroke-width="1.200"/>
<path d="M828.500 429v22" stroke="#7c8698" stroke-width="0.800" stroke-dasharray="3 2"/>
<g fill="#9ca7ba"><rect x="784.800" y="461" width="2.400" height="11"/><rect x="796" y="461" width="2.400" height="11"/><rect x="804.400" y="461" width="2.400" height="11"/><rect x="815.600" y="461" width="2.400" height="11"/></g>
<path d="M830.500 461.500l5 5.500-5 5.500" fill="none" stroke="#a6b0c2" stroke-width="1"/>
<circle cx="750.200" cy="533.800" r="1.500" fill="#2a3a2a"/><circle cx="769.800" cy="533.800" r="1.500" fill="#2a3a2a"/>
<rect x="743" y="552.500" width="33.500" height="7" fill="#d2d6ea"/>
<rect x="743" y="557.500" width="33.500" height="2" fill="#b8bdd6"/>
<!-- yellow arrow -->
<path d="M299 596L517.500 494.500 514.200 491.700 532.100 493.900 521.100 506.700 522.300 502.800 299.600 597.300z" fill="#fdb800"/>
</svg>
<!-- tooltip -->
<div style="position:absolute;left:547px;top:440px;width:179px;height:32px;background:#fff;border:1px solid #c9d8e6;box-shadow:4px 3px 2px rgba(30,15,15,0.5)"></div>
<div class="t" style="left:556px;top:449px;color:#222;letter-spacing:-0.2px">曲面:F2(导入特征):PRT0279_1</div>
  </div>
</div>
<div id="rightwhite"></div>
</body>
</html>
